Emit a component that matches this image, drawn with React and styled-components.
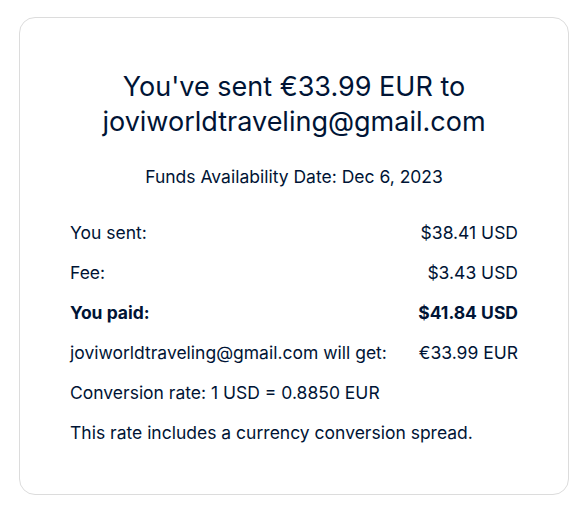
import React from "react";
import styled, { createGlobalStyle } from "styled-components";

const Global = createGlobalStyle`
  html, body { margin: 0; padding: 0; background: #ffffff; }
  body { font-family: Inter, "Liberation Sans", sans-serif; color: #001435; }
`;

const Page = styled.div`
  padding: 17px 10px 17px 19px;
`;

const Card = styled.section`
  width: 550px;
  height: 478px;
  box-sizing: border-box;
  border: 1px solid #dcdcdc;
  border-radius: 16px;
  padding: 51px 50px 0 50px;
  display: flex;
  flex-direction: column;
`;

const Title = styled.h1`
  margin: 0;
  text-align: center;
  font-size: 27px;
  line-height: 35px;
  font-weight: 400;
  color: #001435;
`;

const DateLine = styled.p`
  margin: 28px 0 0;
  text-align: center;
  font-size: 17.5px;
  line-height: 20px;
`;

const List = styled.div`
  margin-top: 36px;
  display: flex;
  flex-direction: column;
  gap: 20px;
`;

const Row = styled.div`
  display: flex;
  justify-content: space-between;
  font-size: 17.5px;
  line-height: 20px;
  font-weight: ${(p) => (p.$bold ? 700 : 400)};
`;

const Note = styled.div`
  font-size: 17.5px;
  line-height: 20px;
`;

export default function App() {
  return (
    <>
      <Global />
      <Page>
        <Card>
          <Title>
            You've sent €33.99 EUR to
            <br />
            joviworldtraveling@gmail.com
          </Title>
          <DateLine>Funds Availability Date: Dec 6, 2023</DateLine>
          <List>
            <Row><span>You sent:</span><span>$38.41 USD</span></Row>
            <Row><span>Fee:</span><span>$3.43 USD</span></Row>
            <Row $bold><span>You paid:</span><span>$41.84 USD</span></Row>
            <Row><span>joviworldtraveling@gmail.com will get:</span><span>€33.99 EUR</span></Row>
            <Note>Conversion rate: 1 USD = 0.8850 EUR</Note>
            <Note>This rate includes a currency conversion spread.</Note>
          </List>
        </Card>
      </Page>
    </>
  );
}
